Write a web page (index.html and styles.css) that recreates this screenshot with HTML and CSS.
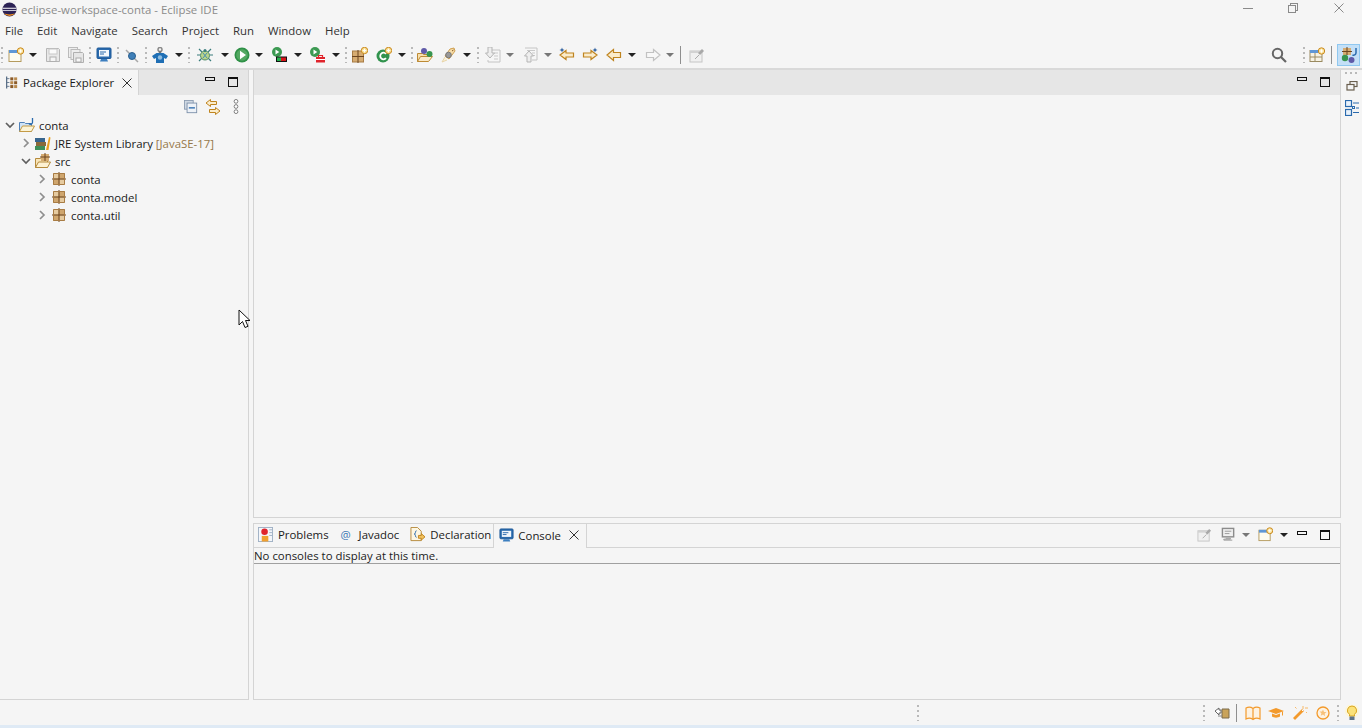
FILE: index.html
```html
<!DOCTYPE html>
<html lang="en">
<head>
    <meta charset="UTF-8">
    <meta name="viewport" content="width=device-width, initial-scale=1.0">
    <title>eclipse-workspace-conta - Eclipse IDE</title>
    <link rel="stylesheet" href="styles.css">
</head>
<body>
    <svg class="sprites" width="0" height="0">
        <symbol id="i-eclipse" viewBox="0 0 16 16"><circle cx="8" cy="8" r="7.500" fill="#2c2255"/><path d="M1 6.200h14v1H1zM.6 8.400h14.800v1H.6z" fill="#fff"/><path d="M2 12a7.500 7.500 0 0 0 12 0c-3 1.600-9 1.600-12 0z" fill="#f7941e"/></symbol>
        <symbol id="i-new" viewBox="0 0 16 16"><rect x="1" y="3.500" width="12" height="11" fill="#fdfbf0" stroke="#b59b5e"/><rect x="1" y="3" width="12" height="3" fill="#5f97d6"/><circle cx="12.500" cy="4" r="3.200" fill="#fbe39b" stroke="#c8881c"/><path d="M12.500 2.300v3.400M10.800 4h3.400" stroke="#fff"/></symbol>
        <symbol id="i-save" viewBox="0 0 16 16"><path d="M1.500 1.500h12l1 1v12h-13z" fill="#e8e8e8" stroke="#b5b5b5"/><rect x="4" y="2" width="8" height="5" fill="#fafafa" stroke="#c8c8c8"/><rect x="5" y="10" width="6" height="4.500" fill="#f5f5f5" stroke="#b0b0b0"/></symbol>
        <symbol id="i-saveall" viewBox="0 0 16 16"><rect x="0.500" y="0.500" width="9" height="10" fill="#eee" stroke="#bbb"/><rect x="3" y="2.500" width="9" height="10" fill="#eee" stroke="#bbb"/><path d="M5.500 5.500h9l1 1v9h-10z" fill="#e6e6e6" stroke="#b0b0b0"/><rect x="8" y="11" width="5" height="4" fill="#f7f7f7" stroke="#aaa"/></symbol>
        <symbol id="i-monitor" viewBox="0 0 16 16"><rect x="1" y="1" width="14" height="10.500" rx="1" fill="#2a6aad" stroke="#1f5a99"/><rect x="3" y="3" width="10" height="6.500" fill="#f2f7fc"/><path d="M4 5h6M4 7h4" stroke="#2a6aad"/><path d="M5 12h6l1 2.500H4z" fill="#3d7fc0"/></symbol>
        <symbol id="i-monitor-gray" viewBox="0 0 16 16"><rect x="1.500" y="1.500" width="12" height="9" fill="#f0f0f0" stroke="#8c8c8c" stroke-width="1.500"/><path d="M4 4.500h7M4 7h5" stroke="#999"/><path d="M5 12h5v1H3v1h9" fill="none" stroke="#999"/></symbol>
        <symbol id="i-skip" viewBox="0 0 16 16"><path d="M2 3l12 12" stroke="#a8a8a8" stroke-width="1.500"/><circle cx="8" cy="9" r="3.500" fill="#3f7fb8" stroke="#2a5f8f"/></symbol>
        <symbol id="i-shirt" viewBox="0 0 16 16"><circle cx="8" cy="2.500" r="2" fill="none" stroke="#8a8a8a" stroke-width="1.500"/><path d="M8 4v3" stroke="#777" stroke-width="2.500"/><path d="M4.500 6L0 9l2 3 2-1v5h8v-5l2 1 2-3-4.500-3z" fill="#1f6fb5"/><circle cx="8" cy="10.500" r="2.200" fill="#8fbde0"/></symbol>
        <symbol id="i-bug" viewBox="0 0 16 16"><path d="M2 2l3 3M14 2l-3 3M0 8h3M13 8h3M2 14l3-3M14 14l-3-3" stroke="#3b7d7d" stroke-width="1.200"/><circle cx="8" cy="8.500" r="4.500" fill="#b9d58a" stroke="#4f8a6a"/><path d="M6 6l4 5M10 6l-4 5" stroke="#4a8fb0"/><circle cx="8" cy="3.500" r="1.500" fill="#3b7d7d"/></symbol>
        <symbol id="i-run" viewBox="0 0 16 16"><circle cx="8" cy="8" r="7.500" fill="#2f9147"/><circle cx="8" cy="8" r="5.800" fill="#53a862"/><path d="M6 3.800v8.400l6-4.200z" fill="#fff"/></symbol>
        <symbol id="i-coverage" viewBox="0 0 16 16"><circle cx="6" cy="5" r="5" fill="#3c9a52"/><path d="M4.500 2.500v5l3.800-2.500z" fill="#fff"/><rect x="5" y="9.500" width="11" height="5.500" fill="#111"/><rect x="6" y="10.500" width="4" height="3.500" fill="#22b14c"/><rect x="10" y="10.500" width="5" height="3.500" fill="#d7141a"/></symbol>
        <symbol id="i-external" viewBox="0 0 16 16"><circle cx="6" cy="5" r="5" fill="#3c9a52"/><path d="M4.500 2.500v5l3.800-2.500z" fill="#fff"/><path d="M7 10h9v5.500H7z" fill="#e0242c"/><path d="M9.500 10V8.500h4V10" fill="none" stroke="#e0242c" stroke-width="1.200"/><path d="M7 12.500h9" stroke="#fff"/></symbol>
        <symbol id="i-package" viewBox="0 0 16 16"><rect x="2" y="2" width="12" height="12" fill="#cfa66e"/><path d="M2 2h5.500v5.500H2zM8.500 8.500H14V14H8.500z" fill="#e6cba0"/><path d="M8 1v14M1 8h14" stroke="#6b4520"/><path d="M2.500 2.500h11v11h-11z" stroke="#a87c45" fill="none"/></symbol>
        <symbol id="i-package-new" viewBox="0 0 16 16"><rect x="0.500" y="4" width="11" height="11" fill="#d6ac72" stroke="#a87c45"/><path d="M6 3v13M0 9.500h12" stroke="#6b4520"/><circle cx="12.500" cy="3.500" r="3.200" fill="#fbe39b" stroke="#c8881c"/><path d="M12.500 1.800v3.400M10.800 3.500h3.400" stroke="#fff"/></symbol>
        <symbol id="i-class-new" viewBox="0 0 16 16"><circle cx="7" cy="9" r="6.500" fill="#31934d"/><path d="M10 6.800a3.300 3.300 0 1 0 0 4.400" fill="none" stroke="#fff" stroke-width="1.800"/><circle cx="12.500" cy="3.500" r="3.200" fill="#fbe39b" stroke="#c8881c"/><path d="M12.500 1.800v3.400M10.800 3.500h3.400" stroke="#fff"/></symbol>
        <symbol id="i-opentype" viewBox="0 0 16 16"><path d="M.5 6.500h5l1 1h4v7H.5z" fill="#f8e0ae" stroke="#bd8a34"/><path d="M.5 14.500l3-5h12l-4 5z" fill="#fbeac8" stroke="#bd8a34"/><circle cx="7" cy="4" r="3" fill="#5f5aa8"/><circle cx="12.500" cy="7" r="3" fill="#37944f"/></symbol>
        <symbol id="i-search" viewBox="0 0 16 16"><path d="M9 2l4-1 1 3-6 8-4-3z" fill="#f6dca8" stroke="#cf9f4f"/><circle cx="7.500" cy="8" r="2.800" fill="#999" stroke="#777"/><path d="M4 10L1 15l5-2" fill="#fbf1d8" stroke="#e8d5a8"/><path d="M11 4l1.500-1" stroke="#8a5a20"/></symbol>
        <symbol id="i-next-ann" viewBox="0 0 16 16"><path d="M6 3h9v12H3v-2" fill="#f6f6f6" stroke="#c4c4c4"/><path d="M9 6h4M9 9h4M9 12h4" stroke="#c9c9c9"/><path d="M3 0h4v6h2.500L5 11 .5 6H3z" fill="#eee" stroke="#b5b5b5"/></symbol>
        <symbol id="i-prev-ann" viewBox="0 0 16 16"><path d="M2 1h12v12H9" fill="#f6f6f6" stroke="#c4c4c4"/><path d="M4 3.500h8M9 6h3M9 8.500h3" stroke="#c9c9c9"/><path d="M4 15V9H1.500L6 4l4.500 5H8v6z" fill="#eee" stroke="#b5b5b5"/></symbol>
        <symbol id="i-edit-back" viewBox="0 0 16 16"><path d="M7 3.500L1 8l6 4.500V10h7.500V6H7z" fill="#fbeccb" stroke="#bf841f" stroke-width="1.200"/><path d="M3 .5l.7 1.800L5.500 3l-1.800.7L3 5.500l-.7-1.800L.5 3l1.800-.7z" fill="#2d5f9e"/></symbol>
        <symbol id="i-edit-fwd" viewBox="0 0 16 16"><path d="M9 3.500L15 8l-6 4.500V10H1.500V6H9z" fill="#fbeccb" stroke="#bf841f" stroke-width="1.200"/><path d="M13 .5l.7 1.800 1.800.7-1.800.7-.7 1.800-.7-1.800-1.800-.7 1.800-.7z" fill="#2d5f9e"/></symbol>
        <symbol id="i-back" viewBox="0 0 16 16"><path d="M7.500 2.500L1 8l6.500 5.500V10.500h7V5.500h-7z" fill="#fbeccb" stroke="#bf841f" stroke-width="1.200"/></symbol>
        <symbol id="i-forward" viewBox="0 0 16 16"><path d="M8.500 2.500L15 8l-6.500 5.500V10.500h-7V5.500h7z" fill="#f8f8f8" stroke="#c2c2c2" stroke-width="1.200"/></symbol>
        <symbol id="i-pin" viewBox="0 0 16 16"><rect x="1" y="4" width="12" height="11" fill="#f0f0f0" stroke="#c6c6c6"/><path d="M1 5h9" stroke="#d2d2d2" stroke-width="2"/><path d="M6 12l4-4" stroke="#aaa"/><path d="M9 6l4-4 2 2-4 4z" fill="#a8a8a8"/></symbol>
        <symbol id="i-collapse" viewBox="0 0 16 16"><rect x="0.500" y="0.500" width="10" height="10" fill="#cfd8e2" stroke="#8a9bb0"/><rect x="3.500" y="3.500" width="11" height="11" fill="#eef2f7" stroke="#7a8ea8"/><path d="M5.500 9h7" stroke="#2a6aad" stroke-width="1.500"/></symbol>
        <symbol id="i-link" viewBox="0 0 16 16"><path d="M5.500 .5L1 4l4.500 3.500V5.500h6v-3h-6z" fill="#fbeccb" stroke="#bf841f"/><path d="M10.500 8.500L15 12l-4.500 3.500v-2h-6v-3h6z" fill="#fbeccb" stroke="#bf841f"/></symbol>
        <symbol id="i-menu" viewBox="0 0 6 16"><circle cx="3" cy="2.500" r="2" fill="#fff" stroke="#777"/><circle cx="3" cy="8" r="2" fill="#fff" stroke="#777"/><circle cx="3" cy="13.500" r="2" fill="#fff" stroke="#777"/></symbol>
        <symbol id="i-view" viewBox="0 0 14 14"><rect x="0" y="0" width="1.500" height="14" fill="#5b7088"/><path d="M1 2.500h3M1 7h3M1 11.500h3" stroke="#5b7088"/><rect x="5" y="1" width="3.500" height="3.500" fill="#8a5a28"/><rect x="9.500" y="1" width="3.500" height="3.500" fill="#b98a4e"/><rect x="5" y="5.500" width="3.500" height="3.500" fill="#b98a4e"/><rect x="9.500" y="5.500" width="3.500" height="3.500" fill="#8a5a28"/><rect x="5" y="10" width="3.500" height="3.500" fill="#8a5a28"/><rect x="9.500" y="10" width="3.500" height="3.500" fill="#b98a4e"/></symbol>
        <symbol id="i-project" viewBox="0 0 16 16"><path d="M.5 5.500h5l1 1h6v8h-12z" fill="#cfe3f6" stroke="#4f81b8"/><path d="M.5 14.500l3-5.500h12l-3 5.500z" fill="#fbf3d6" stroke="#c49a45"/><path d="M13.500 1v4.500a2 2 0 0 1-3.500 1" fill="none" stroke="#2a6aad" stroke-width="1.300"/></symbol>
        <symbol id="i-library" viewBox="0 0 16 16"><rect x="0" y="11" width="10" height="4" fill="#3f8f58"/><rect x="1" y="7" width="10" height="4" fill="#8a6a3a"/><rect x="0" y="3" width="10" height="4" fill="#37658f"/><path d="M11 15l3-13 1.500.5-2 12.500z" fill="#e8a020"/></symbol>
        <symbol id="i-src" viewBox="0 0 16 16"><path d="M.5 5.500h5l1 1h6v8h-12z" fill="#f9e5b8" stroke="#b58a3c"/><path d="M.5 14.500l3-5.500h12l-3 5.500z" fill="#fdf1d2" stroke="#b58a3c"/><rect x="6" y="1" width="8" height="7" fill="#d6ac72"/><path d="M10 0v8M5 4h10" stroke="#6b4520"/></symbol>
        <symbol id="i-problems" viewBox="0 0 16 16"><rect x="0.500" y="0.500" width="15" height="15" fill="#f4f6fa" stroke="#9fb0c4"/><circle cx="7" cy="5" r="3.500" fill="#e0242c"/><rect x="4" y="9.500" width="7" height="6" fill="#f0a030"/><path d="M12 3h3M12 6h3M12 9h3" stroke="#9fb0c4"/></symbol>
        <symbol id="i-declaration" viewBox="0 0 16 16"><path d="M1 .5h7l4 4v10H1z" fill="#fdf7e3" stroke="#b58a3c"/><path d="M7 4c-1.500 0-1 2-1.500 3L4.500 7.500 5.500 8c.5 1 0 3 1.500 3" fill="none" stroke="#2a6aad"/><path d="M9 9h3V7l4 3.500-4 3.500v-2H9z" fill="#f3c25e" stroke="#bf841f"/></symbol>
        <symbol id="i-persp" viewBox="0 0 16 16"><rect x="1" y="3.500" width="12" height="11" fill="#f7f3e4" stroke="#9a8a60"/><rect x="1" y="3" width="12" height="3" fill="#5f97d6"/><path d="M6 6v9M1 10h12" stroke="#9a8a60"/><circle cx="12.500" cy="4" r="3.200" fill="#fbe39b" stroke="#c8881c"/><path d="M12.500 2.300v3.400M10.800 4h3.400" stroke="#fff"/></symbol>
        <symbol id="i-java" viewBox="0 0 16 16"><rect x="2" y="1" width="8" height="7" fill="#d6ac72"/><path d="M6 0v8M1 4.500h10" stroke="#6b4520"/><path d="M15 1v5a2.500 2.500 0 0 1-3.500 2" fill="none" stroke="#2a6aad" stroke-width="1.500"/><circle cx="4" cy="11" r="3.200" fill="#37944f"/><circle cx="10.500" cy="13" r="3" fill="#5f5aa8"/></symbol>
        <symbol id="i-restore" viewBox="0 0 12 10"><rect x="4" y="0.500" width="7" height="5" fill="none" stroke="#6a5f4f" stroke-width="1.200"/><rect x="1" y="3.500" width="7" height="5.500" fill="#f5f5f5" stroke="#6a5f4f" stroke-width="1.200"/></symbol>
        <symbol id="i-tasks" viewBox="0 0 14 16"><rect x="0.500" y="0.500" width="6" height="6" fill="#e8f1fa" stroke="#2a6aad" stroke-width="1.200"/><rect x="0.500" y="9.500" width="6" height="6" fill="#e8f1fa" stroke="#2a6aad" stroke-width="1.200"/><path d="M8 3h6M11 8h3M8 12.500h6" stroke="#2a6aad"/><rect x="7.500" y="6.500" width="2" height="2" fill="none" stroke="#2a6aad"/></symbol>
        <symbol id="i-door" viewBox="0 0 16 16"><path d="M8 4h7v9H8z" fill="#c9a35a" stroke="#7a6a4a"/><path d="M1 6l4-3v2h2v3H5v2z" fill="#fff" stroke="#666"/><path d="M4 11h4" stroke="#888"/></symbol>
        <symbol id="i-book" viewBox="0 0 16 16"><path d="M1 3c2-1 5-1 7 .500 2-1.500 5-1.500 7-.500v11c-2-1-5-1-7 .500-2-1.500-5-1.500-7-.500zM8 3.500v11" fill="#fdf2e2" stroke="#f39a2c" stroke-width="1.200"/></symbol>
        <symbol id="i-hat" viewBox="0 0 16 16"><path d="M0 6l8-3 8 3-8 3z" fill="#f39a2c"/><path d="M4 8.500v3c2 1.500 6 1.500 8 0v-3L8 10z" fill="#f39a2c"/><path d="M14.500 6.500v4" stroke="#f39a2c"/></symbol>
        <symbol id="i-wand" viewBox="0 0 16 16"><path d="M3 15l-2-2 9-9 2 2z" fill="#f39a2c"/><path d="M11 1v3M13 3h3M3 2l1.500 1.500M14 7l1 1" stroke="#f7b866"/><path d="M10 5l1 1" stroke="#fff"/></symbol>
        <symbol id="i-star" viewBox="0 0 16 16"><circle cx="8" cy="8" r="6" fill="#fdf2e2" stroke="#f39a2c" stroke-width="1.300"/><path d="M8 4.500l1 2.400 2.500.2-1.900 1.700.6 2.500L8 9.500l-2.200 1.300.6-2.500-1.900-1.700 2.500-.2z" fill="#f7c078"/></symbol>
        <symbol id="i-bulb" viewBox="0 0 16 16"><circle cx="8" cy="6" r="7" fill="#fdf6d8"/><path d="M8 1a4.500 4.500 0 0 0-2.500 8.300V11h5V9.300A4.500 4.500 0 0 0 8 1z" fill="#fbe27a" stroke="#d9a520"/><rect x="5.500" y="11.500" width="5" height="3.500" fill="#5f7488"/></symbol>
        <symbol id="i-close" viewBox="0 0 10 10"><path d="M.5.500l9 9M9.500.500l-9 9" stroke="currentColor" fill="none"/></symbol>
        <symbol id="i-twist" viewBox="0 0 10 10"><path d="M3 1l4 4-4 4" fill="none" stroke="#8e8e8e" stroke-width="1.700"/></symbol>
        <symbol id="i-twist-open" viewBox="0 0 10 10"><path d="M1 3l4 4 4-4" fill="none" stroke="#5f5f5f" stroke-width="1.700"/></symbol>
    </svg>

    <header class="titlebar">
        <svg class="app-icon"><use href="#i-eclipse"/></svg>
        <span class="app-title">eclipse-workspace-conta - Eclipse IDE</span>
        <div class="window-buttons">
            <span class="win-min"></span>
            <span class="win-restore"></span>
            <svg class="win-close"><use href="#i-close"/></svg>
        </div>
    </header>

    <nav class="menubar">
        <span>File</span><span>Edit</span><span>Navigate</span><span>Search</span><span>Project</span><span>Run</span><span>Window</span><span>Help</span>
    </nav>

    <div class="toolbar">
        <span class="handle first"></span>
        <svg class="ic m4"><use href="#i-new"/></svg><i class="arrow m5"></i>
        <svg class="ic m8"><use href="#i-save"/></svg>
        <svg class="ic m7"><use href="#i-saveall"/></svg>
        <span class="handle m5"></span>
        <svg class="ic m4"><use href="#i-monitor"/></svg>
        <span class="handle m5"></span>
        <svg class="ic m4"><use href="#i-skip"/></svg>
        <span class="handle m5"></span>
        <svg class="ic m4"><use href="#i-shirt"/></svg><i class="arrow m7"></i>
        <span class="handle m5"></span>
        <svg class="ic m6"><use href="#i-bug"/></svg><i class="arrow m8"></i>
        <svg class="ic m5"><use href="#i-run"/></svg><i class="arrow m5"></i>
        <svg class="ic m8"><use href="#i-coverage"/></svg><i class="arrow m7"></i>
        <svg class="ic m7"><use href="#i-external"/></svg><i class="arrow m7"></i>
        <span class="handle m5"></span>
        <svg class="ic m4"><use href="#i-package-new"/></svg>
        <svg class="ic m8"><use href="#i-class-new"/></svg><i class="arrow m6"></i>
        <span class="handle m5"></span>
        <svg class="ic m3"><use href="#i-opentype"/></svg>
        <svg class="ic m8"><use href="#i-search"/></svg><i class="arrow m6"></i>
        <span class="handle m6"></span>
        <svg class="ic m5"><use href="#i-next-ann"/></svg><i class="arrow off m5"></i>
        <svg class="ic m9"><use href="#i-prev-ann"/></svg><i class="arrow off m5"></i>
        <svg class="ic m7"><use href="#i-edit-back"/></svg>
        <svg class="ic m7"><use href="#i-edit-fwd"/></svg>
        <svg class="ic m8"><use href="#i-back"/></svg><i class="arrow m6"></i>
        <svg class="ic m9"><use href="#i-forward"/></svg><i class="arrow off m5"></i>
        <span class="tool-sep m6"></span>
        <svg class="ic m8"><use href="#i-pin"/></svg>

        <div class="toolbar-right">
            <svg class="search-glass" viewBox="0 0 16 16"><circle cx="6.500" cy="6.500" r="4.700" fill="none" stroke="#666" stroke-width="2"/><path d="M10 10l5 5" stroke="#666" stroke-width="2.200"/></svg>
            <span class="handle persp-handle"></span>
            <svg class="ic"><use href="#i-persp"/></svg>
            <span class="tool-sep"></span>
            <span class="persp-active"><svg class="ic"><use href="#i-java"/></svg></span>
        </div>
    </div>

    <div class="workbench">
        <section class="pane explorer">
            <div class="tabs">
                <div class="tab active explorer-tab">
                    <svg class="tab-icon"><use href="#i-view"/></svg>
                    <span>Package Explorer</span>
                    <svg class="tab-close"><use href="#i-close"/></svg>
                </div>
                <div class="tab-tools">
                    <span class="pane-min"></span><span class="pane-max"></span>
                </div>
            </div>
            <div class="view-tools">
                <svg class="ic-small"><use href="#i-collapse"/></svg>
                <svg class="ic"><use href="#i-link"/></svg>
                <svg class="ic-menu"><use href="#i-menu"/></svg>
            </div>
            <ul class="tree">
                <li class="lvl-0"><svg class="twist"><use href="#i-twist-open"/></svg><svg class="ic"><use href="#i-project"/></svg><span>conta</span></li>
                <li class="lvl-1"><svg class="twist"><use href="#i-twist"/></svg><svg class="ic"><use href="#i-library"/></svg><span>JRE System Library <em>[JavaSE-17]</em></span></li>
                <li class="lvl-1"><svg class="twist"><use href="#i-twist-open"/></svg><svg class="ic"><use href="#i-src"/></svg><span>src</span></li>
                <li class="lvl-2"><svg class="twist"><use href="#i-twist"/></svg><svg class="ic"><use href="#i-package"/></svg><span>conta</span></li>
                <li class="lvl-2"><svg class="twist"><use href="#i-twist"/></svg><svg class="ic"><use href="#i-package"/></svg><span>conta.model</span></li>
                <li class="lvl-2"><svg class="twist"><use href="#i-twist"/></svg><svg class="ic"><use href="#i-package"/></svg><span>conta.util</span></li>
            </ul>
        </section>

        <div class="center">
            <section class="pane editor">
                <div class="tabs editor-tabs">
                    <div class="tab-tools"><span class="pane-min"></span><span class="pane-max"></span></div>
                </div>
            </section>
            <section class="pane console">
                <div class="console-tabs">
                    <div class="tab"><svg class="ic-tab"><use href="#i-problems"/></svg><span>Problems</span></div>
                    <div class="tab"><span class="at-sign">@</span><span>Javadoc</span></div>
                    <div class="tab"><svg class="ic-tab"><use href="#i-declaration"/></svg><span>Declaration</span></div>
                    <div class="tab active console-tab">
                        <svg class="ic-tab"><use href="#i-monitor"/></svg>
                        <span>Console</span>
                        <svg class="tab-close"><use href="#i-close"/></svg>
                    </div>
                    <div class="console-tools">
                        <svg class="ic-tab"><use href="#i-pin"/></svg>
                        <svg class="ic-tab m9"><use href="#i-monitor-gray"/></svg><i class="arrow off m6"></i>
                        <svg class="ic-tab m8"><use href="#i-new"/></svg><i class="arrow m7"></i>
                        <span class="pane-min m9"></span><span class="pane-max"></span>
                    </div>
                </div>
                <p class="console-msg">No consoles to display at this time.</p>
            </section>
        </div>

        <aside class="trim">
            <span class="trim-dots"></span>
            <svg class="trim-restore"><use href="#i-restore"/></svg>
            <svg class="trim-tasks"><use href="#i-tasks"/></svg>
        </aside>
    </div>

    <footer class="statusbar">
        <span class="handle status-handle"></span>
        <span class="handle status-tools"></span>
        <svg class="ic m8"><use href="#i-door"/></svg>
        <span class="tool-sep m6"></span>
        <svg class="ic m8"><use href="#i-book"/></svg>
        <svg class="ic m7"><use href="#i-hat"/></svg>
        <svg class="ic m8"><use href="#i-wand"/></svg>
        <svg class="ic m7"><use href="#i-star"/></svg>
        <span class="handle m6"></span>
        <svg class="ic m4"><use href="#i-bulb"/></svg>
    </footer>
    <div class="desktop-strip"></div>

    <svg class="mouse-cursor" viewBox="0 0 13 20"><path d="M1 1v15l3.500-3.500 2.500 6 3-1.200-2.500-5.800H12z" fill="#fff" stroke="#111"/></svg>
</body>
</html>
```

FILE: styles.css
```css
body {
    font-family: "Open Sans", "Noto Sans", sans-serif;
    font-size: 11.4px;
    margin: 0;
    height: 728px;
    overflow: hidden;
    background-color: #f5f5f5;
    color: #1a1a1a;
    display: flex;
    flex-direction: column;
}

.sprites {
    position: absolute;
}

/* Title and menu */
.titlebar {
    height: 19px;
    display: flex;
    align-items: center;
    padding-left: 2px;
    flex: none;
}

.app-icon {
    width: 15px;
    height: 15px;
    margin-right: 4px;
}

.app-title {
    color: #8b8b8b;
}

.window-buttons {
    margin-left: auto;
    margin-bottom: 3px;
    display: flex;
    align-items: center;
    height: 16px;
    padding-right: 18px;
    color: #8a8a8a;
}

.win-min {
    width: 10px;
    height: 1px;
    background: #8a8a8a;
    margin-right: 35px;
}

.win-restore {
    width: 6px;
    height: 6px;
    border: 1px solid #8a8a8a;
    margin-top: 2px;
    margin-right: 38px;
    box-shadow: 2px -2px 0 -1px #f5f5f5, 2px -2px 0 0 #8a8a8a;
}

.win-close {
    width: 10px;
    height: 10px;
}

.menubar {
    height: 22px;
    flex: none;
    display: flex;
    align-items: center;
    padding-left: 5px;
    gap: 14px;
    color: #333;
}

/* Main toolbar */
.toolbar {
    height: 29px;
    flex: none;
    display: flex;
    align-items: center;
    box-sizing: border-box;
    padding-top: 1px;
    border-bottom: 2px solid #d9d9d9;
}

.ic {
    width: 16px;
    height: 16px;
    flex: none;
}

.handle {
    width: 2px;
    height: 16px;
    margin-right: 1px;
    flex: none;
    background: repeating-linear-gradient(to bottom, #b9b9b9 0 2px, transparent 2px 5px);
}

.handle.first {
    margin-left: 1px;
}

.arrow {
    width: 0;
    height: 0;
    flex: none;
    border-left: 4px solid transparent;
    border-right: 4px solid transparent;
    border-top: 4px solid #222;
}

.arrow.off {
    border-top-color: #777;
}

.tool-sep {
    width: 1px;
    height: 18px;
    background: #8f8f8f;
    flex: none;
}

.m3 { margin-left: 3px; }
.m4 { margin-left: 4px; }
.m5 { margin-left: 5px; }
.m6 { margin-left: 6px; }
.m7 { margin-left: 7px; }
.m8 { margin-left: 8px; }
.m9 { margin-left: 9px; }

.toolbar-right {
    margin-left: auto;
    display: flex;
    align-items: center;
    padding-right: 2px;
}

.search-glass {
    width: 16px;
    height: 16px;
    margin-right: 16px;
}

.persp-handle {
    margin-right: 4px;
}

.toolbar-right .tool-sep {
    margin: 0 5px 0 6px;
}

.persp-active {
    width: 21px;
    height: 20px;
    background: #c4e0f7;
    border: 1px solid #90c8f0;
    display: flex;
    align-items: center;
    justify-content: center;
}

/* Panes */
.workbench {
    height: 630px;
    flex: none;
    display: flex;
}

.pane {
    box-sizing: border-box;
    border-right: 1px solid #d4d4d4;
    border-bottom: 1px solid #d4d4d4;
}

.explorer {
    width: 249px;
    flex: none;
}

.tabs {
    height: 25px;
    display: flex;
    background: #e6e6e6;
}

.tab {
    display: flex;
    align-items: center;
    height: 100%;
}

.tab.active {
    background: #f5f5f5;
}

.explorer-tab {
    width: 139px;
    box-sizing: border-box;
    padding-left: 6px;
    border-right: 1px solid #d4d4d4;
}

.tab-icon {
    width: 12px;
    height: 13px;
    margin-right: 5px;
}

.tab-close {
    width: 10px;
    height: 10px;
    margin-left: 8px;
    color: #333;
    flex: none;
}

.tab-tools {
    margin-left: auto;
    display: flex;
    align-items: center;
    gap: 13px;
    padding: 0 10px 2px 0;
}

.pane-min {
    width: 8px;
    height: 2px;
    border: 1px solid #111;
    margin-top: -5px;
    flex: none;
}

.pane-max {
    width: 8px;
    height: 7px;
    border: 1px solid #111;
    border-top-width: 2px;
    margin-top: 1px;
    flex: none;
}

.view-tools {
    height: 21px;
    box-sizing: border-box;
    padding: 2px 9px 0 0;
    display: flex;
    align-items: center;
    justify-content: flex-end;
}

.ic-small {
    width: 14px;
    height: 14px;
    margin-right: 7px;
}

.ic-menu {
    width: 6px;
    height: 15px;
    margin-left: 12px;
}

.tree {
    list-style: none;
    margin: 0;
    padding: 0;
}

.tree li {
    height: 18px;
    display: flex;
    align-items: center;
}

.tree .lvl-0 { padding-left: 5px; }
.tree .lvl-1 { padding-left: 21px; }
.tree .lvl-2 { padding-left: 37px; }

.twist {
    width: 10px;
    height: 10px;
    margin-right: 4px;
    flex: none;
}

.tree .ic {
    margin-right: 4px;
}

.tree em {
    font-style: normal;
    color: #95784a;
}

.center {
    width: 1088px;
    margin-left: 4px;
    flex: none;
    display: flex;
    flex-direction: column;
}

.center .pane {
    border-left: 1px solid #d4d4d4;
}

.editor {
    height: 448px;
    flex: none;
}

.console {
    flex: 1;
    margin-top: 5px;
    border-top: 1px solid #d4d4d4;
}

.console-tabs {
    height: 24px;
    display: flex;
    box-sizing: border-box;
    border-bottom: 1px solid #d4d4d4;
    padding-left: 4px;
}

.console-tabs .tab {
    margin-right: 11px;
    box-sizing: border-box;
    padding-bottom: 2px;
}

.ic-tab {
    width: 15px;
    height: 15px;
    flex: none;
}

.tab > .ic-tab {
    margin-right: 5px;
}

.at-sign {
    width: 12px;
    margin-right: 7px;
    color: #3b78b5;
    text-align: center;
}

.console-tabs .console-tab {
    height: 24px;
    margin-right: 0;
    margin-left: -9px;
    padding: 0 7px 2px 5px;
    border-left: 1px solid #d4d4d4;
    border-right: 1px solid #d4d4d4;
}

.console-tab > .ic-tab {
    margin-right: 4px;
}

.console-tools {
    margin-left: auto;
    display: flex;
    align-items: center;
    padding: 0 10px 2px 0;
}

.console-tools .pane-min {
    margin-top: -3px;
}

.console-tools .pane-max {
    margin-left: 13px;
}

.console-msg {
    margin: 0;
    height: 15px;
    line-height: 15px;
    border-bottom: 1px solid #a0a0a0;
    color: #222;
}

.trim {
    flex: 1;
    display: flex;
    flex-direction: column;
    align-items: center;
    padding-top: 2px;
}

.trim-dots {
    width: 14px;
    height: 2px;
    background: repeating-linear-gradient(to right, #b9b9b9 0 2px, transparent 2px 5px);
}

.trim-restore {
    width: 12px;
    height: 10px;
    margin-top: 7px;
}

.trim-tasks {
    width: 14px;
    height: 16px;
    margin-top: 9px;
}

/* Bottom */
.statusbar {
    height: 25px;
    flex: none;
    display: flex;
    align-items: center;
    padding-right: 2px;
}

.status-handle {
    margin-left: 917px;
}

.status-tools {
    margin-left: auto;
}

.desktop-strip {
    flex: 1;
    background: #dfeaf5;
}

.mouse-cursor {
    position: absolute;
    left: 238px;
    top: 309px;
    width: 13px;
    height: 20px;
}
```
